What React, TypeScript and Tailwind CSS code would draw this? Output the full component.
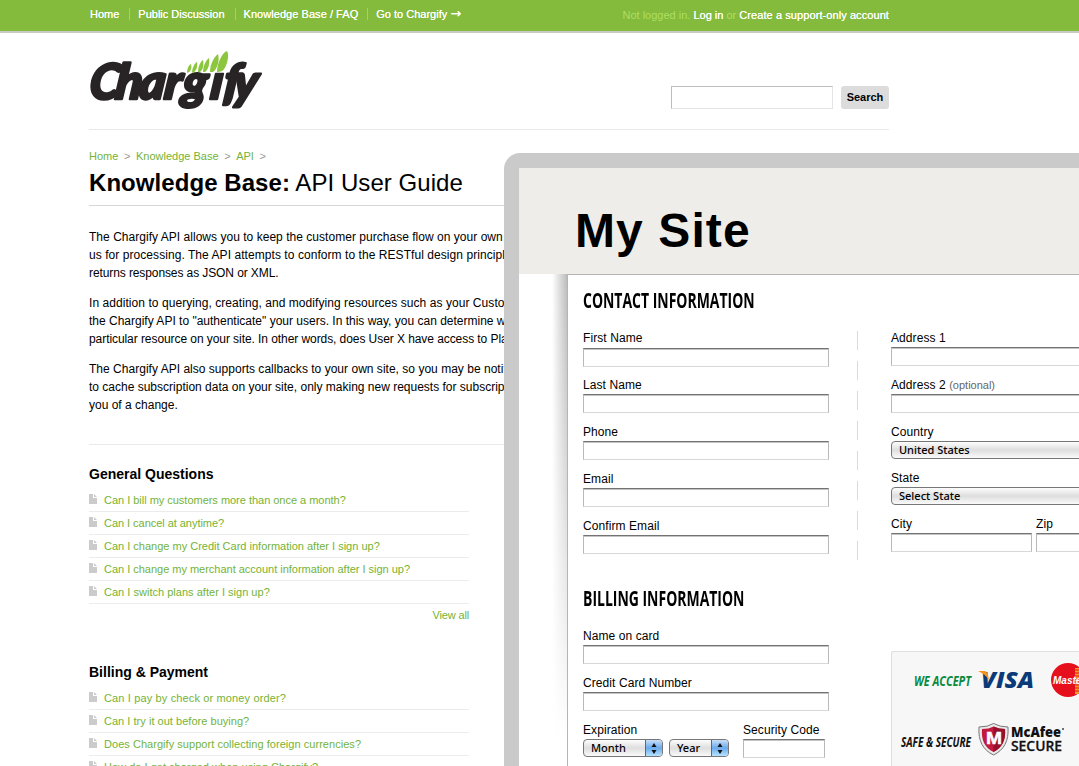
import type { ReactNode } from 'react';

const general = [
  { q: 'Can I bill my customers more than once a month?', fit: 'tracking-[-0.02px]' },
  { q: 'Can I cancel at anytime?', fit: 'tracking-[-0.04px]' },
  { q: 'Can I change my Credit Card information after I sign up?', fit: '' },
  { q: 'Can I change my merchant account information after I sign up?', fit: 'tracking-[-0.015px]' },
  { q: 'Can I switch plans after I sign up?', fit: 'tracking-[0.02px]' },
];
const billing = [
  { q: 'Can I pay by check or money order?', fit: 'tracking-[0.14px]' },
  { q: 'Can I try it out before buying?', fit: 'tracking-[0.03px]' },
  { q: 'Does Chargify support collecting foreign currencies?', fit: 'tracking-[0.04px]' },
  { q: 'How do I get charged when using Chargify?', fit: 'tracking-[0.02px]' },
];

function Logo() {
  return (
    <svg width="180" height="66" viewBox="0 0 180 66" className="-ml-px block" role="img" aria-label="Chargify">
      <defs>
        <clipPath id="word">
          <path d="M0 0H116V22.500H136V0H190V66H0Z" />
        </clipPath>
      </defs>
      <g transform="translate(5.900 0) skewX(-6.500)">
        <text
          y="49.500"
          x="0 26 50 75 93 121 134 144"
          clipPath="url(#word)"
          fontFamily="Lato, sans-serif"
          fontWeight="900"
          fontStyle="italic"
          fontSize="49"
          fill="#282425"
          stroke="#282425"
          strokeWidth="2.600"
          strokeLinejoin="round"
        >
          Chargify
        </text>
      </g>
      <g fill="#8cc63f">
        <path d="M99 23C99 18 101 15 103 14C104 17 103 21 101 22Z" />
        <path d="M104 23C104 17 107 13 109 12C110 16 108 21 106 22Z" />
        <path d="M110 22C110 16 113 11 115 10C116 15 115 20 112 22Z" />
        <path d="M115 22C115 15 119 9 121 8C122 14 120 20 117 22Z" />
        <path d="M122 22C122 13 127 6 130 4C132 11 129 19 125 22Z" />
        <path d="M129 22C129 12 135 2 139 1C142 6 138 19 134 21Q132 22 129 22Z" />
      </g>
    </svg>
  );
}

function Faq({ title, items, viewAll }: { title: string; items: { q: string; fit: string }[]; viewAll?: boolean }) {
  return (
    <section className="h-[198px] w-[380px]">
      <h3 className="h-[24px] text-[14px] leading-[18px] font-bold text-black">{title}</h3>
      <ul>
        {items.map(({ q, fit }) => (
          <li key={q} className="flex h-[23px] border-b border-[#ececec] text-[11px] leading-[22px] text-[#74b336]">
            <svg width="8" height="10" viewBox="0 0 8 10" className="mt-[5px] mr-[7px] shrink-0">
              <path d="M0 0H4V4H8V10H0Z" fill="#cbcbcb" />
              <path d="M5 0L8 3H5Z" fill="#cbcbcb" />
            </svg>
            <a className={`whitespace-nowrap ${fit}`}>{q}</a>
          </li>
        ))}
      </ul>
      {viewAll && (
        <p className="text-right text-[11px] leading-[22px] tracking-[-0.15px] text-[#74b336]">View all</p>
      )}
    </section>
  );
}

function Box({ className }: { className: string }) {
  return (
    <div
      className={`h-[19px] shrink-0 border border-t-[#737373] border-r-[#b9b9b9] border-b-[#d8d8d8] border-l-[#b9b9b9] bg-white shadow-[inset_0_1px_0_#c4c4c4] ${className}`}
    />
  );
}

function Label({ children }: { children: ReactNode }) {
  return (
    <label className="block h-[17px] text-[12px] leading-[17px] tracking-[0.08px] whitespace-nowrap text-black">
      {children}
    </label>
  );
}

function Field({ label, className = '' }: { label: string; className?: string }) {
  return (
    <div className="h-[47px]">
      <Label>{label}</Label>
      <Box className={`w-[246px] ${className}`} />
    </div>
  );
}

function Select({ text, className, arrow }: { text: string; className: string; arrow?: boolean }) {
  return (
    <div
      className={`flex h-[18px] shrink-0 overflow-hidden rounded-[4px] border border-[#777] bg-linear-to-b from-[#fdfdfd] via-[#dedede] to-[#fafafa] font-['Noto_Sans',sans-serif] text-[11px] leading-[16px] font-medium text-black ${className}`}
    >
      <span className="flex-1 pl-[7px] whitespace-nowrap">{text}</span>
      {arrow && (
        <span className="-my-px -mr-px w-[18px] border border-[#3d6fae] bg-linear-to-b from-[#c8dff8] via-[#69a9ec] to-[#b5e4ff]">
          <svg width="16" height="16" viewBox="0 0 16 16">
            <path d="M5.500 7L8 3L10.500 7ZM5.500 10L8 14L10.500 10Z" fill="#111" />
          </svg>
        </span>
      )}
    </div>
  );
}

function Heading({ children }: { children: ReactNode }) {
  return (
    <h2 className="h-[52px] origin-left scale-x-[0.665] font-['Open_Sans',sans-serif] text-[21px] leading-[50px] font-bold whitespace-nowrap text-black">
      {children}
    </h2>
  );
}

function Badges() {
  return (
    <svg width="192" height="115" viewBox="891 651 192 115" className="block">
      <g fontFamily="'Open Sans', sans-serif" fontStyle="italic" fontWeight="700" fontSize="14">
        <text x="914" y="686" textLength="57" lengthAdjust="spacingAndGlyphs" fill="#078a3e">WE ACCEPT</text>
        <text x="901" y="747" textLength="70" lengthAdjust="spacingAndGlyphs" fill="#111">SAFE &amp; SECURE</text>
      </g>
      <text x="981" y="688" textLength="53" lengthAdjust="spacingAndGlyphs" fontFamily="'Open Sans', sans-serif" fontStyle="italic" fontWeight="800" fontSize="23.500" fill="#0b3a78">VISA</text>
      <path d="M978 671H985Q988 672 989 680Q985 674 978 671Z" fill="#f6921e" />
      <circle cx="1068" cy="680" r="17" fill="#e60f1c" />
      <path d="M1075 668H1083V694H1075Z" fill="#f59a23" />
      <path d="M1073 670H1083M1073 673H1083M1073 676H1083M1073 679H1083M1073 682H1083M1073 685H1083M1073 688H1083M1073 691H1083" stroke="#e60f1c" />
      <text x="1053" y="684" textLength="55" lengthAdjust="spacingAndGlyphs" fontFamily="'Liberation Sans', sans-serif" fontStyle="italic" fontWeight="700" fontSize="11" fill="#fff">MasterCard</text>
      <path d="M979 727Q988 727 993.500 723.500Q1000 727 1008 727C1009 741 1004 750 993.500 755C983 750 978 741 979 727Z" fill="#e9e9e9" stroke="#777" />
      <path d="M982 729Q989 729 993.500 726.500Q999 729 1005 729C1006 740 1002 748 993.500 752C985 748 981 740 982 729Z" fill="#c2193c" />
      <path d="M993.500 726.500Q999 729 1005 729C1006 740 1002 748 993.500 752Z" fill="#960f2b" />
      <text x="986" y="744" textLength="16" lengthAdjust="spacingAndGlyphs" fontFamily="'Liberation Sans', sans-serif" fontWeight="700" fontSize="16" fill="#fff" stroke="#fff" strokeWidth=".5">M</text>
      <text x="1011" y="737" textLength="50" lengthAdjust="spacingAndGlyphs" fontFamily="'Open Sans', sans-serif" fontWeight="800" fontSize="14.500" fill="#111">McAfee</text>
      <circle cx="1063" cy="729" r="1" fill="#444" />
      <text x="1011" y="751" textLength="51" lengthAdjust="spacingAndGlyphs" fontFamily="'Open Sans', sans-serif" fontWeight="600" fontSize="14" fill="#111" stroke="#111" strokeWidth=".3">SECURE</text>
    </svg>
  );
}

function Checkout() {
  return (
    <div className="absolute top-[153px] left-[504px] h-[640px] w-[700px] overflow-hidden rounded-tl-[16px] bg-[#cacaca] pt-[15px] pl-[15px]">
      <div className="flex h-[106px] items-center bg-[#eeede9] pt-[19px] pl-[56px]">
        <h1 className="text-[48px] leading-[56px] font-bold tracking-[1.1px] whitespace-nowrap text-black">My Site</h1>
      </div>
      <div className="flex h-[520px] bg-white">
        <div className="w-[33px]" />
        <div className="h-full w-[15px] bg-linear-to-r from-transparent to-[#bcbcbc] mask-b-from-0% mask-b-to-90%" />
        <div className="flex h-full flex-1 border-t border-l border-[#b5b5b5] pl-[15px]">
          <div className="w-[246px] shrink-0">
            <Heading>CONTACT INFORMATION</Heading>
            <div className="h-[3px]" />
            <Field label="First Name" className="mt-px" />
            <Field label="Last Name" />
            <Field label="Phone" />
            <Field label="Email" />
            <Field label="Confirm Email" />
            <div className="h-[8px]" />
            <Heading>BILLING INFORMATION</Heading>
            <div className="h-[3px]" />
            <Field label="Name on card" />
            <Field label="Credit Card Number" />
            <div className="flex">
              <div className="w-[160px]">
                <Label>Expiration</Label>
                <div className="flex gap-[6px]">
                  <Select text="Month" className="w-[80px]" arrow />
                  <Select text="Year" className="w-[60px]" arrow />
                </div>
              </div>
              <div>
                <Label>Security Code</Label>
                <Box className="w-[82px]" />
              </div>
            </div>
          </div>
          <div className="mt-[56px] ml-[28px] h-[229px] w-px shrink-0 bg-[repeating-linear-gradient(to_bottom,#dadada_0_19px,transparent_19px_30px)]" />
          <div className="mt-[55px] ml-[33px] w-[260px] shrink-0">
            <Field label="Address 1" />
            <div className="h-[47px]">
              <Label>
                Address 2 <span className="text-[11px] tracking-normal text-[#666]">(optional)</span>
              </Label>
              <Box className="w-[246px]" />
            </div>
            <div className="h-[46px]">
              <Label>Country</Label>
              <Select text="United States" className="w-[246px]" />
            </div>
            <div className="h-[46px]">
              <Label>State</Label>
              <Select text="Select State" className="w-[246px]" />
            </div>
            <div className="flex h-[135px] gap-[4px]">
              <div>
                <Label>City</Label>
                <Box className="w-[141px]" />
              </div>
              <div>
                <Label>Zip</Label>
                <Box className="w-[100px]" />
              </div>
            </div>
            <div className="h-[130px] rounded-[2px] bg-[#f7f7f7] shadow-[inset_1px_1px_0_#dfdfdf]">
              <Badges />
            </div>
          </div>
        </div>
      </div>
    </div>
  );
}

export default function App() {
  return (
    <div className="relative h-[766px] w-[1079px] overflow-hidden bg-white font-['Liberation_Sans',Arial,sans-serif] text-black">
      <header className="h-[33px] border-b-2 border-[#c8cbc3] bg-[#84bb3c] pl-[89px] text-[11px] leading-[28px] text-white">
        <div className="flex h-full w-[800px] justify-between whitespace-nowrap">
          <nav className="flex items-start pl-px [text-shadow:0_0_0.5px_white]">
            <a>Home</a>
            <i className="mt-[8px] mr-[8px] ml-[10px] h-[12px] w-px bg-[#a7d261]" />
            <a>Public Discussion</a>
            <i className="mt-[8px] mr-[8px] ml-[10px] h-[12px] w-px bg-[#a7d261]" />
            <a className="tracking-[0.05px]">Knowledge Base / FAQ</a>
            <i className="mt-[8px] mr-[8px] ml-[9px] h-[12px] w-px bg-[#a7d261]" />
            <a>
              Go to Chargify <span className="font-['DejaVu_Sans'] text-[13px]">→</span>
            </a>
          </nav>
          <p className="leading-[30px] text-[#aede63]">
            Not logged in. <a className="text-white [text-shadow:0_0_0.5px_white]">Log in</a> or{' '}
            <a className="tracking-[0.08px] text-white [text-shadow:0_0_0.5px_white]">Create a support-only account</a>
          </p>
        </div>
      </header>
      <main className="ml-[89px] w-[800px]">
        <div className="flex h-[97px] items-start border-b border-[#e9e9e9] pt-[17px]">
          <Logo />
          <div className="mt-[36px] ml-auto h-[23px] w-[162px] border border-t-[#bdbdbd] border-r-[#e4e4e4] border-b-[#e4e4e4] border-l-[#bdbdbd]" />
          <button className="mt-[36px] ml-[8px] h-[23px] w-[48px] rounded-[3px] bg-[#dcdcdc] text-[11px] font-bold">Search</button>
        </div>
        <p className="mt-[17px] flex h-[18px] gap-[5.6px] text-[11px] leading-[18px] text-[#74b336]">
          <a>Home</a>
          <span className="text-[#999]">&gt;</span>
          <a>Knowledge Base</a>
          <span className="text-[#999]">&gt;</span>
          <a>API</a>
          <span className="text-[#999]">&gt;</span>
        </p>
        <h1 className="h-[41px] border-b border-[#d6d6d6] text-[24px] leading-[36px] tracking-[0.06px] whitespace-nowrap">
          <b>Knowledge Base:</b> API User Guide
        </h1>
        <div className="flex h-[239px] flex-col gap-[12px] border-b border-[#e9e9e9] pt-[22px] text-[12px] leading-[18px] whitespace-nowrap">
          <p>
            <span className="tracking-[0.03px]">The Chargify API allows you to keep the customer purchase flow on your own site</span>
            <br />
            <span className="tracking-[0.06px]">us for processing. The API attempts to conform to the RESTful design principles</span>
            <br />
            <span className="tracking-[-0.1px]">returns responses as JSON or XML.</span>
          </p>
          <p>
            <span className="tracking-[0.06px]">In addition to querying, creating, and modifying resources such as your Customers</span>
            <br />
            the Chargify API to "authenticate" your users. In this way, you can determine what
            <br />
            <span className="tracking-[-0.07px]">particular resource on your site. In other words, does User X have access to Plan</span>
          </p>
          <p>
            <span className="tracking-[0.02px]">The Chargify API also supports callbacks to your own site, so you may be notified</span>
            <br />
            to cache subscription data on your site, only making new requests for subscription
            <br />
            you of a change.
          </p>
        </div>
        <div className="pt-[20px]">
          <Faq title="General Questions" items={general} viewAll />
          <Faq title="Billing & Payment" items={billing} />
        </div>
      </main>
      <Checkout />
    </div>
  );
}
